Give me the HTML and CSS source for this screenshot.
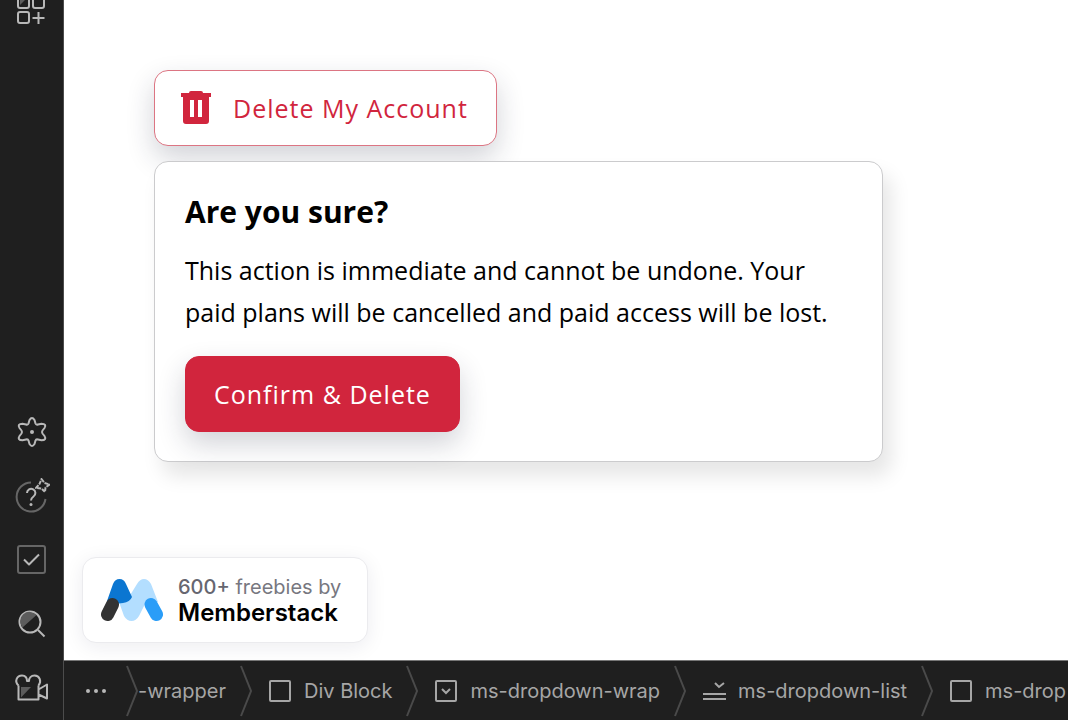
FILE: index.html
```html
<!DOCTYPE html>
<html lang="en">
<head>
    <meta charset="UTF-8">
    <meta name="viewport" content="width=device-width, initial-scale=1.0">
    <title>Delete My Account</title>
    <link rel="stylesheet" href="styles.css">
</head>
<body>
    <aside class="sidebar">
        <button class="tool tool-top" type="button" aria-label="Add component">
            <svg width="36" height="26" viewBox="0 0 36 26">
                <rect x="4" y="-3" width="11" height="11" rx="2"/>
                <rect x="19" y="-3" width="11" height="11" rx="2"/>
                <rect x="4" y="12" width="11" height="11" rx="2"/>
                <path d="M24.500 12v12M18.500 18h12"/>
                <path class="shade" d="M6 5V0h5z"/>
            </svg>
        </button>
        <button class="tool" type="button" aria-label="Settings">
            <svg width="36" height="36" viewBox="0 0 36 36">
                <path d="M15.500 6Q18 2 20.500 6L21.500 9.500Q22 11 24 10.500L27.500 9.700Q33 10 30.500 14L28.500 16.500Q27.500 18 28.500 19.500L30.500 22Q33 26 27.500 26.300L24 25.500Q22 25 21.500 26.500L20.500 30Q18 34 15.500 30L14.500 26.500Q14 25 12 25.500L8.500 26.300Q3 26 5.500 22L7.500 19.500Q8.500 18 7.500 16.500L5.500 14Q3 10 8.500 9.700L12 10.500Q14 11 14.500 9.500Z"/>
                <circle class="dot" cx="18" cy="18" r="2"/>
            </svg>
        </button>
        <button class="tool" type="button" aria-label="Help">
            <svg width="36" height="36" viewBox="0 0 36 36">
                <path class="dim" d="M17 4.500A14.500 14.500 0 1 0 31.500 21"/>
                <path d="M13 15a4.200 4.200 0 1 1 6.500 3.500C17.500 20 17 20.500 17 22.500"/>
                <circle class="dot" cx="17" cy="26.500" r="1.500"/>
                <path class="spark" d="M27.500 1L30.500 5L35.500 6.500L31.500 9.500L31 14L27.500 10.500L22 10L25.500 6Z"/>
            </svg>
        </button>
        <button class="tool" type="button" aria-label="Audit">
            <svg width="36" height="36" viewBox="0 0 36 36">
                <rect class="dim" x="4" y="4" width="27" height="27" rx="2"/>
                <path d="M10 17.500l5 5 10-10"/>
            </svg>
        </button>
        <button class="tool" type="button" aria-label="Search">
            <svg width="36" height="36" viewBox="0 0 36 36">
                <circle cx="16" cy="16" r="10.500"/>
                <path class="shade" d="M8.500 21.500A9 9 0 0 1 22.500 9z"/>
                <path d="M24 24l6.500 6.500"/>
            </svg>
        </button>
        <button class="tool" type="button" aria-label="Video tutorials">
            <svg width="36" height="36" viewBox="0 0 36 36">
                <path d="M4.500 15.500V29.500H24.500V15.500M4.500 15.500C0 11 3 5.500 8 5.500c3.500 0 5 2.500 5 5.500h2c0-3 2-5.500 5.500-5.500 5 0 7.500 5.500 4 10M24.500 19.500l8.500-5v14L24.500 24.500"/>
                <path class="shade" d="M7 27.500v-10.500h10z"/>
            </svg>
        </button>
    </aside>

    <div class="workspace">
        <main class="canvas">
            <section class="account">
                <button class="btn btn-outline" type="button">
                    <svg width="30" height="34" viewBox="0 0 30 34">
                        <path fill-rule="evenodd" d="M0 2h8q0-2 2-2h10q2 0 2 2h8v4h-2v24q0 3-3 3H5q-3 0-3-3V6H0zM9 9v17h4V9zm8 0v17h4V9z"/>
                    </svg>
                    Delete My Account
                </button>
                <div class="dropdown">
                    <h2>Are you sure?</h2>
                    <p>This action is immediate and cannot be undone. Your paid plans will be cancelled and paid access will be lost.</p>
                    <button class="btn btn-solid" type="button">Confirm &amp; Delete</button>
                </div>
            </section>

            <a class="badge" href="#">
                <svg width="62" height="44" viewBox="0 0 62 44">
                    <path fill="#b3deff" d="M18 24L23 38Q26 43 30.500 43Q35 43 38 38L45 24L57 24L50 6Q47 1 43 1Q39 1 36 6L28 19Q25 24 18 24Z"/>
                    <path fill="#0b76d1" d="M6 23L12 6Q14 1 18.500 1Q23 1 25 6L31 19Q29 24 22 25L14 26Z"/>
                    <path class="pill" stroke="#333" d="M6.500 36.500l5-10"/>
                    <path class="pill" stroke="#2a9df8" d="M50 26.500l5.500 10"/>
                </svg>
                <span class="badge-text">
                    <span class="badge-small"><b>600+</b> freebies by</span>
                    <strong>Memberstack</strong>
                </span>
            </a>
        </main>

        <nav class="crumbs" aria-label="Element path">
            <button class="more" type="button" aria-label="More">
                <svg width="20" height="4" viewBox="0 0 20 4">
                    <circle cx="2" cy="2" r="2"/><circle cx="10" cy="2" r="2"/><circle cx="18" cy="2" r="2"/>
                </svg>
            </button>
            <svg class="sep" width="12" height="52" viewBox="0 0 12 52"><path d="M1 1l10 25L1 51"/></svg>
            <a class="crumb crumb-cut" href="#">-wrapper</a>
            <svg class="sep" width="12" height="52" viewBox="0 0 12 52"><path d="M1 1l10 25L1 51"/></svg>
            <a class="crumb" href="#">
                <svg width="24" height="24" viewBox="0 0 24 24"><rect x="2" y="2" width="20" height="20" rx="1"/></svg>
                Div Block
            </a>
            <svg class="sep" width="12" height="52" viewBox="0 0 12 52"><path d="M1 1l10 25L1 51"/></svg>
            <a class="crumb" href="#">
                <svg width="24" height="24" viewBox="0 0 24 24"><rect x="2" y="2" width="20" height="20" rx="1"/><path d="M8 10l4 4 4-4"/></svg>
                ms-dropdown-wrap
            </a>
            <svg class="sep" width="12" height="52" viewBox="0 0 12 52"><path d="M1 1l10 25L1 51"/></svg>
            <a class="crumb" href="#">
                <svg width="24" height="24" viewBox="0 0 24 24"><path d="M1 15h23M1 20h23M13 4l4 4 5-4"/></svg>
                ms-dropdown-list
            </a>
            <svg class="sep" width="12" height="52" viewBox="0 0 12 52"><path d="M1 1l10 25L1 51"/></svg>
            <a class="crumb" href="#">
                <svg width="24" height="24" viewBox="0 0 24 24"><rect x="2" y="2" width="20" height="20" rx="1"/></svg>
                ms-drop
            </a>
        </nav>
    </div>
</body>
</html>
```
FILE: styles.css
```css
* {
    box-sizing: border-box;
}

body {
    display: flex;
    min-height: 100vh;
    margin: 0;
    background-color: #fff;
    font-family: "Open Sans", "Noto Sans", sans-serif;
}

button {
    font-family: inherit;
    cursor: pointer;
}

a {
    text-decoration: none;
}

.sidebar {
    display: flex;
    flex-direction: column;
    flex: none;
    width: 64px;
    background-color: #1f1f1f;
    border-right: 1px solid #4c4c4c;
}

.tool {
    display: flex;
    align-items: center;
    justify-content: center;
    height: 64px;
    padding: 0;
    border: none;
    background: none;
}

.tool-top {
    align-items: flex-start;
    margin-bottom: auto;
}

.tool svg {
    fill: none;
    stroke: #b8b8b8;
    stroke-width: 2;
    stroke-linejoin: round;
}

.tool .dim {
    stroke: #666;
}

.tool .spark {
    stroke-dasharray: 4 1;
}

.tool .dot {
    fill: #b8b8b8;
    stroke: none;
}

.tool .shade {
    fill: #5c5c5c;
    stroke: none;
}

.workspace {
    display: flex;
    flex-direction: column;
    flex: 1;
    min-width: 0;
    padding-right: 12px;
}

.canvas {
    display: flex;
    flex-direction: column;
    align-items: flex-start;
    flex: 1;
    padding: 70px 18px 17px;
}

.account {
    display: flex;
    flex-direction: column;
    align-items: flex-start;
    gap: 15px;
    padding-left: 72px;
}

.btn {
    display: flex;
    align-items: center;
    gap: 22px;
    padding: 18px 28px;
    border: 1px solid #d1253d;
    border-radius: 14px;
    font-size: 25px;
    line-height: 38px;
    letter-spacing: 1px;
    box-shadow: 0 12px 28px rgba(30, 35, 60, 0.2);
}

.btn-outline {
    padding-left: 26px;
    border-color: #dc7583;
    background-color: #fff;
    color: #d1253d;
}

.btn-outline svg {
    fill: #d1253d;
}

.btn-solid {
    background-color: #d1253d;
    color: #fff;
}

.dropdown {
    position: relative;
    max-width: 729px;
    padding: 29px 30px;
    border: 1px solid #cbcbcd;
    border-radius: 14px;
    background-color: #fff;
    box-shadow: 8px 14px 20px rgba(0, 0, 0, 0.1);
}

.dropdown h2 {
    margin: 0 0 16px;
    font-size: 30px;
    line-height: 42px;
}

.dropdown p {
    margin: 0 0 23px;
    font-size: 25px;
    line-height: 42px;
}

.badge {
    display: flex;
    align-items: center;
    gap: 15px;
    margin-top: auto;
    padding: 16px 26px 16px 18px;
    border: 1px solid #ebebee;
    border-radius: 14px;
    background-color: #fff;
    color: #000;
    font-family: Inter, sans-serif;
    box-shadow: 0 4px 20px rgba(20, 20, 60, 0.08);
}

.badge .pill {
    fill: none;
    stroke-width: 13;
    stroke-linecap: round;
}

.badge-text {
    display: flex;
    flex-direction: column;
}

.badge-small {
    color: #777780;
    font-size: 20px;
    line-height: 26px;
}

.badge-small b {
    font-weight: 500;
    color: #666670;
}

.badge strong {
    font-size: 24px;
    font-weight: 600;
    line-height: 26px;
}

.crumbs {
    display: flex;
    align-items: center;
    height: 60px;
    padding-left: 22px;
    overflow: hidden;
    border-top: 1px solid #777;
    background-color: #1f1f1f;
    font-family: Inter, sans-serif;
}

.crumbs svg {
    flex: none;
    fill: none;
    stroke: #a6a6a6;
    stroke-width: 2;
}

.crumbs .sep {
    stroke: #4a4a4a;
}

.more {
    display: flex;
    padding: 0;
    margin-right: 20px;
    border: none;
    background: none;
}

.crumbs .more svg {
    fill: #b8b8b8;
    stroke: none;
}

.crumb {
    display: flex;
    align-items: center;
    gap: 12px;
    padding: 0 14px 0 16px;
    color: #a6a6a6;
    font-size: 20px;
    line-height: 28px;
    white-space: nowrap;
}

.crumb-cut {
    padding-left: 0;
}

.crumb:last-child {
    padding-right: 0;
}
```
